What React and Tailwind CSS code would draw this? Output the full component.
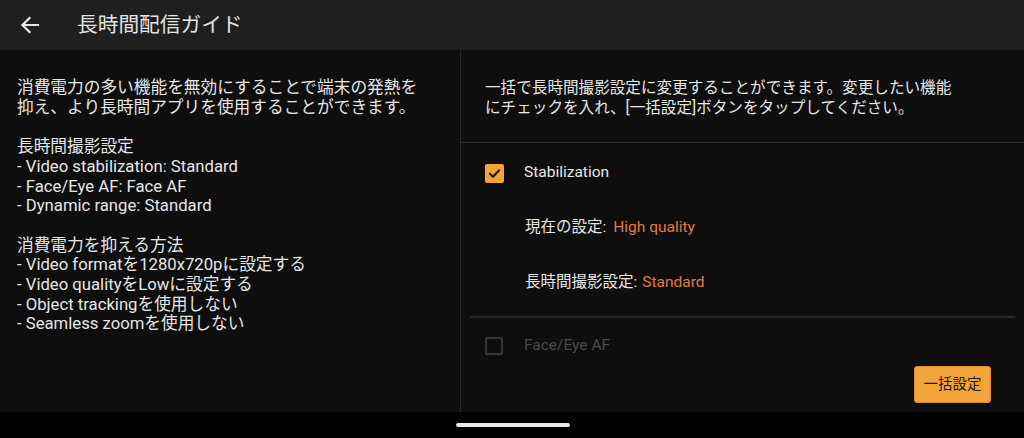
export default function App() {
  return (
    <div className="w-[1024px] h-[438px] flex flex-col bg-[#0e0e0e] text-[#e4e4e4] font-[Roboto,'Noto_Sans_CJK_JP',sans-serif] overflow-hidden">
      {/* Header */}
      <div className="h-[50px] shrink-0 bg-[#1f1f1f] flex items-center">
        <svg width="60" height="50" viewBox="0 0 60 50" className="shrink-0">
          <path d="M38 25H22.5 M29.5 18l-7 7 7 7" fill="none" stroke="#e8e8e8" strokeWidth="2.2" strokeLinecap="square" />
        </svg>
        <div className="ml-[17px] text-[20.7px] leading-none text-[#e2e2e2]">長時間配信ガイド</div>
      </div>

      {/* Body */}
      <div className="flex-1 flex min-h-0">
        {/* Left */}
        <div className="w-[461px] shrink-0 border-r border-[#262626] pl-[17px] pt-[28px] text-[16.7px] leading-[19.7px] text-[#e6e6e6]">
          <div>消費電力の多い機能を無効にすることで端末の発熱を</div>
          <div>抑え、より長時間アプリを使用することができます。</div>
          <div className="h-[19.7px]" />
          <div>長時間撮影設定</div>
          <div>- Video stabilization: Standard</div>
          <div>- Face/Eye AF: Face AF</div>
          <div>- Dynamic range: Standard</div>
          <div className="h-[19.7px]" />
          <div>消費電力を抑える方法</div>
          <div>- Video formatを1280x720pに設定する</div>
          <div>- Video qualityをLowに設定する</div>
          <div>- Object trackingを使用しない</div>
          <div>- Seamless zoomを使用しない</div>
        </div>

        {/* Right */}
        <div className="flex-1 relative overflow-hidden flex flex-col">
          <div className="h-[93px] shrink-0 border-b border-[#2a2a2a] pl-[24px] pt-[28px] text-[15.6px] leading-[20px] text-[#e6e6e6]">
            <div>一括で長時間撮影設定に変更することができます。変更したい機能</div>
            <div>にチェックを入れ、[一括設定]ボタンをタップしてください。</div>
          </div>

          <div className="h-[2px] shrink-0" />

          <div className="h-[56px] shrink-0 flex items-center pl-[24px]">
            <div className="w-[19px] h-[19px] rounded-[2px] bg-[#f2a33a] flex items-center justify-center shrink-0">
              <svg width="13" height="13" viewBox="0 0 13 13">
                <path d="M2 6.8l3 3 6-6.3" fill="none" stroke="#1a1a1a" strokeWidth="2" strokeLinecap="square" />
              </svg>
            </div>
            <div className="ml-[20px] text-[15.5px] leading-none text-[#e8e8e8]">Stabilization</div>
          </div>

          <div className="h-[54px] shrink-0 flex items-center pl-[64px] text-[15.5px] leading-none">
            <span className="text-[#e6e6e6]">現在の設定:</span>
            <span className="ml-[7px] text-[#e27a3c]">High quality</span>
          </div>

          <div className="h-[56px] shrink-0 flex items-center pl-[64px] text-[15.5px] leading-none">
            <span className="text-[#e6e6e6]">長時間撮影設定:</span>
            <span className="ml-[5px] text-[#e27a3c]">Standard</span>
          </div>

          <div className="h-[5px] shrink-0" />
          <div className="h-[2px] shrink-0 mx-[9px] bg-[#262626]" />

          <div className="h-[55px] shrink-0 flex items-center pl-[24px]">
            <div className="w-[18px] h-[18px] rounded-[2px] border-2 border-[#363636] shrink-0" />
            <div className="ml-[21px] text-[15.5px] leading-none text-[#4a4a4a]">Face/Eye AF</div>
          </div>

          <button className="absolute right-[33px] bottom-[9px] w-[77px] h-[37px] rounded-[3px] bg-[#f2a33a] border border-[#d98f2c] text-[14.5px] text-[#1a1a1a] flex items-center justify-center">
            一括設定
          </button>
        </div>
      </div>

      {/* Nav bar */}
      <div className="h-[26px] shrink-0 bg-black flex items-center justify-center">
        <div className="w-[114px] h-[4px] rounded-full bg-[#e8e8e8] ml-[2px]" />
      </div>
    </div>
  );
}
